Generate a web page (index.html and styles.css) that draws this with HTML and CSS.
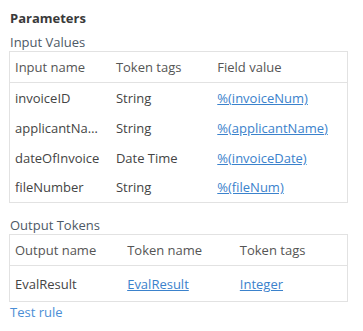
FILE: index.html
```html
<!DOCTYPE html>
<html lang="en">
<head>
  <meta charset="UTF-8" />
  <title>Parameters</title>
  <link rel="stylesheet" href="styles.css">
</head>
<body>
  <div class="params">
    <h3>Parameters</h3>
    <div class="section-label">Input Values</div>
    <table class="grid inputs">
      <colgroup><col class="c30"><col class="c30"><col class="c40"></colgroup>
      <tr><th>Input name</th><th>Token tags</th><th>Field value</th></tr>
      <tr><td>invoiceID</td><td>String</td><td><a href="#">%(invoiceNum)</a></td></tr>
      <tr><td>applicantName</td><td>String</td><td><a href="#">%(applicantName)</a></td></tr>
      <tr><td>dateOfInvoice</td><td>Date Time</td><td><a href="#">%(invoiceDate)</a></td></tr>
      <tr><td>fileNumber</td><td>String</td><td><a href="#">%(fileNum)</a></td></tr>
    </table>

    <div class="section-label out-label">Output Tokens</div>
    <table class="grid outputs">
      <tr><th>Output name</th><th>Token name</th><th>Token tags</th></tr>
      <tr><td>EvalResult</td><td><a href="#">EvalResult</a></td><td><a href="#">Integer</a></td></tr>
    </table>
    <a class="test-link" href="#">Test rule</a>
  </div>
</body>
</html>
```

FILE: styles.css
```css
* {
  margin: 0;
  padding: 0;
  box-sizing: border-box;
  font-family: 'Open Sans', sans-serif;
}

body {
  background: #fff;
  color: #444;
  font-size: 13px;
}

.params {
  width: 347px;
  padding: 9px 0 0 9px;
}

.params h3 {
  font-size: 13px;
  font-weight: 700;
  line-height: 18px;
  color: #3a3a3a;
  padding-left: 1px;
  margin-bottom: 6px;
}

.section-label {
  line-height: 18px;
  color: #4d5966;
  padding-left: 1px;
}

.out-label {
  margin-top: 13px;
}

.grid {
  width: 339px;
  border-collapse: collapse;
  table-layout: fixed;
  border: 1px solid #e2e2e2;
}

.grid th {
  font-weight: 400;
  text-align: left;
  color: #555;
  height: 31px;
  padding: 0 5px;
  border-bottom: 1px solid #e2e2e2;
}

.grid td {
  height: 30px;
  padding: 0 5px;
  white-space: nowrap;
  overflow: hidden;
  text-overflow: ellipsis;
}

.c30 { width: 30%; }
.c40 { width: 40%; }

.outputs th {
  height: 31px;
}

.outputs td {
  height: 36px;
}

.grid a {
  color: #3b82cc;
  text-decoration: underline;
}

.test-link {
  display: block;
  margin-top: 1px;
  line-height: 18px;
  padding-left: 1px;
  color: #4a8ed6;
  text-decoration: none;
}
```
